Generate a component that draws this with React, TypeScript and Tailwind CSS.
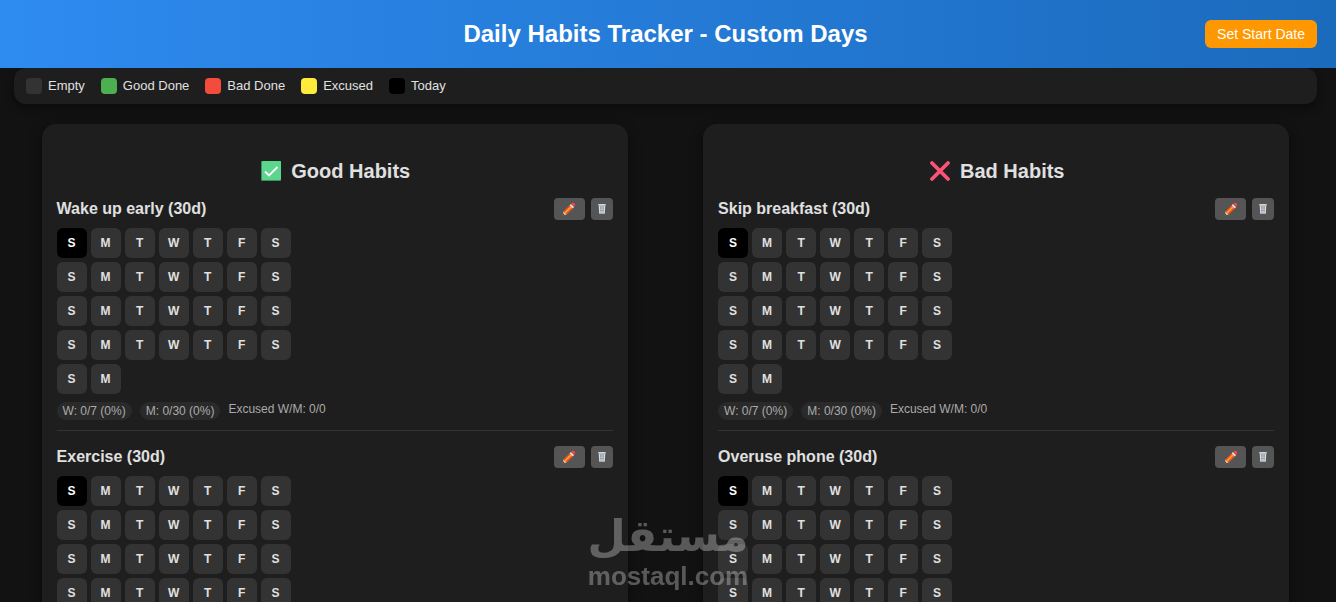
import clsx from "clsx";

type Habit = { name: string; days: number };

const legend = [
  { label: "Empty", color: "bg-[#333333]" },
  { label: "Good Done", color: "bg-[#4caf50]" },
  { label: "Bad Done", color: "bg-[#f44c3c]" },
  { label: "Excused", color: "bg-[#ffeb3b]" },
  { label: "Today", color: "bg-black" },
];

const goodHabits: Habit[] = [
  { name: "Wake up early", days: 30 },
  { name: "Exercise", days: 30 },
];

const badHabits: Habit[] = [
  { name: "Skip breakfast", days: 30 },
  { name: "Overuse phone", days: 30 },
];

const weekDays = ["S", "M", "T", "W", "T", "F", "S"];

function CheckIcon() {
  return (
    <svg width="24" height="20" viewBox="-2 0 24 20" aria-hidden="true">
      <rect width="20" height="20" rx="1" fill="#3f8f63" />
      <rect x="1" width="19" height="19" rx="1" fill="#5bd68d" />
      <path d="M4 10.5 8 14.5 16.5 6" fill="none" stroke="#fff" strokeWidth="1.8" />
    </svg>
  );
}

function CrossIcon() {
  return (
    <svg width="24" height="20" viewBox="-2 0 24 20" aria-hidden="true">
      <path
        d="M2 2 18 18M18 2 2 18"
        fill="none"
        stroke="#fb5278"
        strokeWidth="3.8"
        strokeLinecap="round"
      />
    </svg>
  );
}

function PencilIcon() {
  return (
    <svg width="14" height="14" viewBox="0 0 14 14" aria-hidden="true">
      <path d="M.8 13.2 1.6 9.2 4.8 12.4Z" fill="#f3c79a" />
      <path d="M.8 13.2 1.2 11.6 2.4 12.8Z" fill="#3a3330" />
      <path d="M1.6 9.2 7.6 3.2 10.8 6.4 4.8 12.4Z" fill="#f4511e" />
      <path d="M3.2 10.8 9.2 4.8" stroke="#ffa726" strokeWidth="1.6" />
      <path d="M7.6 3.2 8.9 1.9 12.1 5.1 10.8 6.4Z" fill="#dfe3e6" />
      <path d="M8.9 1.9Q11 .2 12.7 1.3 13.8 3 12.1 5.1Z" fill="#f8453f" />
    </svg>
  );
}

function TrashIcon() {
  return (
    <svg width="8" height="12" viewBox="0 0 8 12" aria-hidden="true">
      <path d="M.6 2h6.8L6.8 11H1.2Z" fill="#9aa3ab" />
      <rect x=".2" y="1" width="7.6" height="1.6" rx=".5" fill="#cfd8dc" />
      <path d="M1.4 3.2 1.9 10.4M6.6 3.2 6.1 10.4" stroke="#dce8ee" strokeWidth="1" />
      <path d="M3.2 3.4v6.8M4.8 3.4v6.8" stroke="#e8e2ec" strokeWidth=".7" />
      <path d="M2 5h4M2 7.5h4" stroke="#77808a" strokeWidth=".5" />
    </svg>
  );
}

function HabitItem({ habit }: { habit: Habit }) {
  const cells = Array.from({ length: habit.days }, (_, i) => weekDays[i % 7]);

  return (
    <div className="mb-[15px] border-b border-[#333333] pb-[10px]">
      <div className="mb-2 flex h-[22px] items-center justify-between">
        <h3 className="font-bold leading-5">
          {habit.name} ({habit.days}d)
        </h3>
        <div className="flex gap-1.5">
          <button
            aria-label={`Edit ${habit.name}`}
            className="flex h-[22px] w-[31px] items-center justify-center rounded bg-[#555555]"
          >
            <PencilIcon />
          </button>
          <button
            aria-label={`Delete ${habit.name}`}
            className="flex h-[22px] w-[22px] items-center justify-center rounded bg-[#555555]"
          >
            <TrashIcon />
          </button>
        </div>
      </div>

      <div className="grid w-fit grid-cols-7 gap-1">
        {cells.map((day, i) => (
          <button
            key={i}
            className={clsx(
              "h-[30px] w-[30px] rounded-md text-xs font-bold",
              i === 0 ? "bg-black text-white" : "bg-[#333333]"
            )}
          >
            {day}
          </button>
        ))}
      </div>

      <div className="mt-2 flex gap-2 text-xs leading-[14px] text-[#aaaaaa]">
        <span className="rounded-[10px] bg-[#2a2a2a] px-1.5 py-0.5">W: 0/7 (0%)</span>
        <span className="rounded-[10px] bg-[#2a2a2a] px-1.5 py-0.5">
          M: 0/{habit.days} (0%)
        </span>
        <span>Excused W/M: 0/0</span>
      </div>
    </div>
  );
}

function HabitColumn({
  title,
  icon,
  habits,
}: {
  title: string;
  icon: React.ReactNode;
  habits: Habit[];
}) {
  return (
    <section className="w-[45%] rounded-[14px] bg-[#1e1e1e] p-[15px] shadow-[0_4px_12px_rgba(0,0,0,0.5)]">
      <h2 className="mb-[15px] mt-5 flex items-center justify-center gap-2 text-xl leading-6 font-bold">
        {icon}
        {title}
      </h2>
      {habits.map((habit) => (
        <HabitItem key={habit.name} habit={habit} />
      ))}
    </section>
  );
}

export default function App() {
  return (
    <div className="h-screen overflow-y-auto bg-[#121212] font-['Liberation_Sans',Arial,sans-serif] text-[#e0e0e0] [scrollbar-width:none]">
      <header className="relative flex h-[68px] items-center justify-center bg-linear-90 from-[#2e8bf0] to-[#1b6bbd] pr-[19px] pl-[14px]">
        <h1 className="text-2xl font-bold text-white">Daily Habits Tracker - Custom Days</h1>
        <button className="absolute right-[19px] h-7 rounded-md bg-[#ff9800] px-3 text-sm text-white">
          Set Start Date
        </button>
      </header>

      <main className="pr-[19px] pl-[14px]">
        <ul className="flex h-9 items-center gap-4 rounded-xl bg-[#1e1e1e] px-3 text-[13px] shadow-[0_4px_8px_rgba(0,0,0,0.4)]">
          {legend.map((item) => (
            <li key={item.label} className="flex items-center gap-1.5">
              <span className={clsx("h-4 w-4 rounded", item.color)} />
              {item.label}
            </li>
          ))}
        </ul>

        <div className="mt-5 flex justify-around gap-5">
          <HabitColumn title="Good Habits" icon={<CheckIcon />} habits={goodHabits} />
          <HabitColumn title="Bad Habits" icon={<CrossIcon />} habits={badHabits} />
        </div>
      </main>

      <div className="pointer-events-none fixed bottom-2.5 left-1/2 flex -translate-x-1/2 flex-col items-center font-bold text-white opacity-30">
        <span dir="rtl" lang="ar" className="font-['DejaVu_Sans',sans-serif] text-[44px] leading-[48px]">
          مستقل
        </span>
        <span className="text-[26px] leading-8">mostaql.com</span>
      </div>
    </div>
  );
}
